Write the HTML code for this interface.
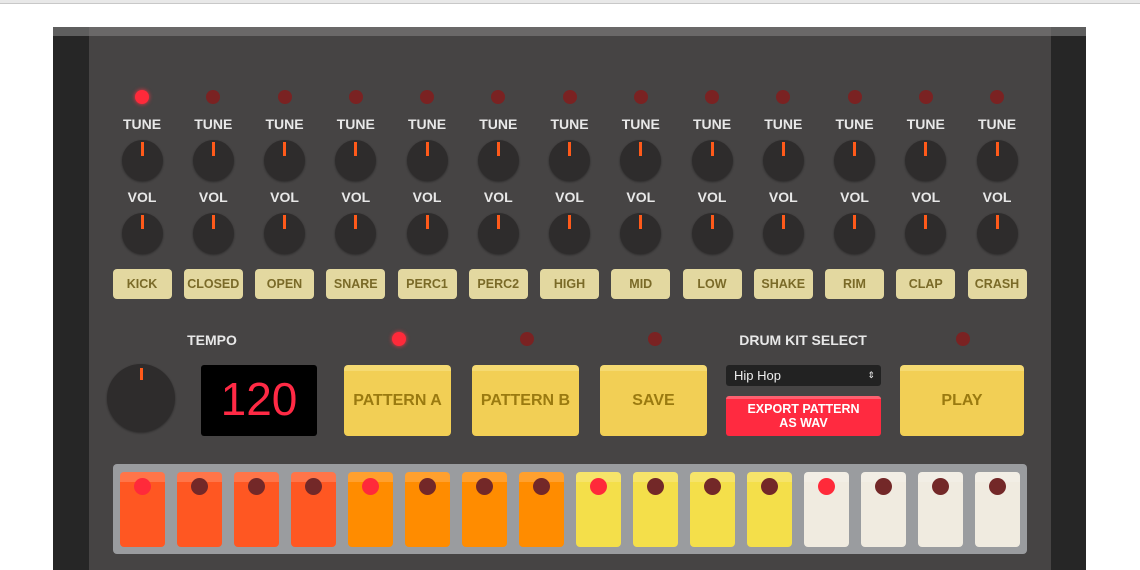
<!DOCTYPE html>
<html><head><meta charset="utf-8"><style>
*{margin:0;padding:0;box-sizing:border-box}
body{width:1140px;height:570px;background:#fff;position:relative;overflow:hidden;font-family:"Liberation Sans",sans-serif;font-weight:bold}
.a{position:absolute}
.led{position:absolute;width:14px;height:14px;border-radius:50%;background:#7a2222}
.led.on{background:#ff2a3a;box-shadow:0 0 4px #ff3040}
.lbl{position:absolute;width:70px;text-align:center;color:#e8e8e8;font-size:14px}
.knob{position:absolute;width:41px;height:41px;border-radius:50%;background:#2e2c2c;box-shadow:0 1px 2px rgba(0,0,0,.4)}
.knob i{position:absolute;left:19px;top:2px;width:3px;height:14px;background:#ff5a1a}
.ib{position:absolute;width:59px;height:30px;border-radius:4px;background:#e3d8a0;color:#7a6a28;font-size:12.5px;text-align:center;line-height:30px}
.yb{position:absolute;top:365px;height:71px;border-radius:4px;background:#f2cf55;color:#9a7a10;font-size:16px;text-align:center;line-height:71px;border-top:6px solid #f5da72}
.yb span{position:relative;top:-6px}
.pad{position:absolute;top:472px;width:45px;height:75px;border-radius:4px;border-top:10px solid rgba(255,255,255,.18)}
.pad b{position:absolute;left:14px;top:-4px;width:17px;height:17px;border-radius:50%;background:#732828}
.pad b.on{background:#ff2a3a}
</style></head><body>
<div class="a" style="left:0;top:0;width:1140px;height:4px;background:#e8e8e8;border-bottom:1px solid #c8c8c8"></div>
<div class="a" style="left:53px;top:27px;width:1033px;height:543px;background:#262626"></div>
<div class="a" style="left:53px;top:27px;width:1033px;height:9px;background:#5e5e5e"></div>
<div class="a" style="left:89px;top:27px;width:962px;height:9px;background:#6a6868"></div>
<div class="a" style="left:89px;top:36px;width:962px;height:534px;background:#464444"></div>
<div id="cols"></div>
<div class="lbl" style="left:177px;top:332px">TEMPO</div>
<div class="knob" style="left:107px;top:364px;width:68px;height:68px"><i style="left:33px;top:4px;height:12px"></i></div>
<div class="a" style="left:201px;top:365px;width:116px;height:71px;background:#000;border-radius:3px;color:#ff2a45;font-size:46px;font-weight:normal;text-align:center;line-height:69px">120</div>
<div class="led on" style="left:392px;top:332px"></div>
<div class="led" style="left:520px;top:332px"></div>
<div class="led" style="left:648px;top:332px"></div>
<div class="led" style="left:956px;top:332px"></div>
<div class="yb" style="left:344px;width:107px"><span>PATTERN A</span></div>
<div class="yb" style="left:472px;width:107px"><span>PATTERN B</span></div>
<div class="yb" style="left:600px;width:107px"><span>SAVE</span></div>
<div class="yb" style="left:900px;width:124px"><span>PLAY</span></div>
<div class="lbl" style="left:733px;top:332px;width:140px">DRUM KIT SELECT</div>
<div class="a" style="left:726px;top:365px;width:155px;height:21px;background:#222;border-radius:3px;color:#eee;font-size:13px;font-weight:normal;line-height:21px;padding-left:8px">Hip Hop<span style="position:absolute;right:6px;top:0;font-size:9px">&#8661;</span></div>
<div class="a" style="left:726px;top:396px;width:155px;height:40px;background:#ff2a40;border-radius:3px;border-top:3px solid #ff6070;color:#fff;font-size:12.5px;text-align:center;line-height:14px;padding-top:3px">EXPORT PATTERN<br>AS WAV</div>
<div class="a" style="left:113px;top:464px;width:914px;height:90px;background:#9a9c9f;border-radius:4px"></div>
<div id="pads"></div>
<script>
var names=["KICK","CLOSED","OPEN","SNARE","PERC1","PERC2","HIGH","MID","LOW","SHAKE","RIM","CLAP","CRASH"];
var h="";
for(var i=0;i<13;i++){var c=142+i*71.25;
h+='<div class="led'+(i==0?' on':'')+'" style="left:'+(c-7)+'px;top:90px"></div>';
h+='<div class="lbl" style="left:'+(c-35)+'px;top:116px">TUNE</div>';
h+='<div class="knob" style="left:'+(c-20.5)+'px;top:140px"><i></i></div>';
h+='<div class="lbl" style="left:'+(c-35)+'px;top:189px">VOL</div>';
h+='<div class="knob" style="left:'+(c-20.5)+'px;top:213px"><i></i></div>';
h+='<div class="ib" style="left:'+(c-29.5)+'px;top:269px">'+names[i]+'</div>';}
document.getElementById("cols").innerHTML=h;
var cols=["#ff5722","#ff8c00","#f4df4a","#f0ebe0"];h="";
for(var j=0;j<16;j++){h+='<div class="pad" style="left:'+(120+j*57)+'px;background:'+cols[j>>2]+'"><b class="'+(j%4==0?'on':'')+'"></b></div>';}
document.getElementById("pads").innerHTML=h;
</script>
</body></html>
